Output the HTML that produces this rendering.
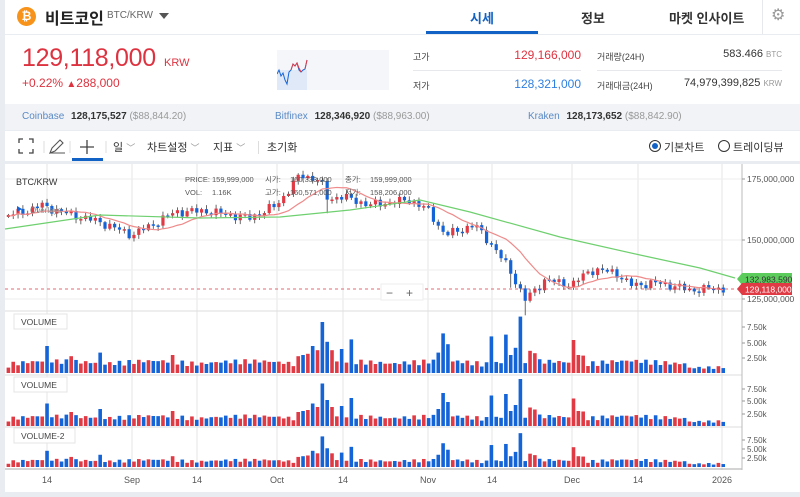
<!DOCTYPE html>
<html><head><meta charset="utf-8">
<style>
*{margin:0;padding:0;box-sizing:border-box}
body{width:800px;height:497px;overflow:hidden;background:#e9ecf1;font-family:"Liberation Sans","Noto Sans CJK KR",sans-serif;position:relative;color:#222}
.a{position:absolute;white-space:nowrap}
</style></head><body>
<div class="a" style="left:5px;top:0;width:795px;height:34px;background:#fff"></div>
<div class="a" style="left:5px;top:35px;width:795px;height:69px;background:#fff"></div>
<div class="a" style="left:5px;top:104px;width:795px;height:26px;background:#f1f3f6"></div>
<div class="a" style="left:5px;top:131px;width:795px;height:30px;background:#fff"></div>
<div class="a" style="left:5px;top:164px;width:795px;height:328px;background:#fff"></div>

<!-- header -->
<div class="a" style="left:17px;top:7px;width:19px;height:19px;border-radius:50%;background:#f7931a;color:#fff;font-size:12px;font-weight:bold;text-align:center;line-height:19px">₿</div>
<div class="a" style="left:45px;top:5px;font-size:16px;font-weight:bold;color:#222">비트코인</div>
<div class="a" style="left:107px;top:10px;font-size:10px;color:#666">BTC/KRW</div>
<div class="a" style="left:159px;top:13px;width:0;height:0;border-left:5px solid transparent;border-right:5px solid transparent;border-top:6px solid #555"></div>
<div class="a" style="left:470px;top:8px;font-size:13px;font-weight:bold;color:#1261c4">시세</div>
<div class="a" style="left:426px;top:31px;width:112px;height:3px;background:#1261c4"></div>
<div class="a" style="left:581px;top:8px;font-size:13px;font-weight:bold;color:#333">정보</div>
<div class="a" style="left:669px;top:8px;font-size:13px;font-weight:bold;color:#333">마켓 인사이트</div>
<div class="a" style="left:762px;top:0;width:1px;height:34px;background:#e6e8ec"></div>
<div class="a" style="left:771px;top:6px;font-size:16px;line-height:20px;color:#999">⚙</div>

<div class="a" style="left:22px;top:44px;font-size:25px;color:#dd3340;letter-spacing:-0.3px">129,118,000</div>
<div class="a" style="left:164px;top:57px;font-size:11px;color:#dd3340">KRW</div>
<div class="a" style="left:22px;top:76px;font-size:12px;color:#dd3340">+0.22% <span style="font-size:10px">▲</span>288,000</div>
<div class="a" style="left:277px;top:50px;width:112px;height:40px;background:#f4f6fa"></div>
<svg class="a" style="left:277px;top:50px" width="40" height="40"><rect x="0" y="20" width="30" height="20" fill="#dfe9f7"/><polyline points="0,24 2,20 4,26 6,23 8,30 10,34 12,22 14,20 16,14 18,16 20,13 22,20 24,22 26,20 28,19 30,10" fill="none" stroke="#1464d8" stroke-width="1"/><polyline points="14,20 16,14 18,16 20,13 22,18 24,22" fill="none" stroke="#e03a45" stroke-width="1"/><polyline points="28,19 30,10" fill="none" stroke="#e03a45"/></svg>

<div class="a" style="left:413px;top:50px;font-size:9px;color:#444">고가</div>
<div class="a" style="left:481px;top:48px;width:100px;text-align:right;font-size:12px;color:#dd3340">129,166,000</div>
<div class="a" style="left:413px;top:70px;width:168px;height:1px;background:#e6e8ec"></div>
<div class="a" style="left:413px;top:79px;font-size:9px;color:#444">저가</div>
<div class="a" style="left:481px;top:77px;width:100px;text-align:right;font-size:12px;color:#2f7fe0">128,321,000</div>
<div class="a" style="left:597px;top:50px;font-size:9px;color:#444">거래량(24H)</div>
<div class="a" style="left:597px;top:70px;width:185px;height:1px;background:#e6e8ec"></div>
<div class="a" style="left:597px;top:79px;font-size:9px;color:#444">거래대금(24H)</div>
<div class="a" style="left:640px;top:48px;width:142px;text-align:right;font-size:11px;color:#333">583.466 <span style="font-size:8px;color:#999">BTC</span></div>
<div class="a" style="left:620px;top:77px;width:162px;text-align:right;font-size:11px;color:#333">74,979,399,825 <span style="font-size:8px;color:#999">KRW</span></div>

<div class="a" style="left:22px;top:111px;font-size:10px;color:#5a8ac6">Coinbase <b style="color:#333;margin-left:4px">128,175,527</b> <span style="color:#999">($88,844.20)</span></div>
<div class="a" style="left:275px;top:111px;font-size:10px;color:#5a8ac6">Bitfinex <b style="color:#333;margin-left:4px">128,346,920</b> <span style="color:#999">($88,963.00)</span></div>
<div class="a" style="left:528px;top:111px;font-size:10px;color:#5a8ac6">Kraken <b style="color:#333;margin-left:4px">128,173,652</b> <span style="color:#999">($88,842.90)</span></div>

<!-- toolbar -->
<svg class="a" style="left:18px;top:138px" width="90" height="18"><path d="M1 5V1H5M11 1H15V5M15 11V15H11M5 15H1V11" fill="none" stroke="#444" stroke-width="1.3"/><line x1="26" y1="3" x2="26" y2="15" stroke="#ddd"/><path d="M32 15L34 10L42 2L45 5L37 13ZM32 15H47" fill="none" stroke="#555" stroke-width="1.1"/><line x1="52" y1="3" x2="52" y2="15" stroke="#ddd"/><path d="M69 2V16M62 9H76" stroke="#444" stroke-width="1.3"/><line x1="88" y1="3" x2="88" y2="15" stroke="#ddd"/></svg>
<div class="a" style="left:72px;top:158px;width:31px;height:3px;background:#1261c4"></div>
<div class="a" style="left:113px;top:139px;font-size:11px;color:#333">일 <span style="color:#999;font-size:9px">﹀</span></div>
<div class="a" style="left:147px;top:139px;font-size:11px;color:#333">차트설정 <span style="color:#999;font-size:9px">﹀</span></div>
<div class="a" style="left:213px;top:139px;font-size:11px;color:#333">지표 <span style="color:#999;font-size:9px">﹀</span></div>
<div class="a" style="left:258px;top:141px;width:1px;height:13px;background:#ddd"></div>
<div class="a" style="left:267px;top:139px;font-size:11px;color:#333">초기화</div>
<div class="a" style="left:649px;top:140px;width:12px;height:12px;border-radius:50%;border:1.3px solid #333"></div>
<div class="a" style="left:652px;top:143px;width:6px;height:6px;border-radius:50%;background:#1261c4"></div>
<div class="a" style="left:664px;top:139px;font-size:11px;color:#333">기본차트</div>
<div class="a" style="left:718px;top:140px;width:12px;height:12px;border-radius:50%;border:1.3px solid #333"></div>
<div class="a" style="left:733px;top:139px;font-size:11px;color:#333">트레이딩뷰</div>

<svg id="c" class="a" style="left:0;top:0" width="800" height="497" font-family="Liberation Sans, Noto Sans CJK KR, sans-serif"></svg>
<script>
var s='',X=function(i){return 8.4+i*4.83};
[47,132,197,277,343,428,492,572,638,722].forEach(function(x){s+='<line x1="'+x+'" y1="164" x2="'+x+'" y2="470" stroke="#e6e6e6"/>'});
[179,240,270,299].forEach(function(y){s+='<line x1="5" y1="'+y+'" x2="742" y2="'+y+'" stroke="#eee"/>'});
[311,375,427].forEach(function(y){s+='<line x1="5" y1="'+y+'" x2="742" y2="'+y+'" stroke="#ddd"/>'});
s+='<line x1="5" y1="469" x2="742" y2="469" stroke="#aaa"/><line x1="742" y1="164" x2="742" y2="470" stroke="#bbb"/>';
var K=[[8,215],[25,212],[40,205],[65,213],[100,222],[132,235],[150,226],[175,212],[205,211],[250,218],[277,205],[300,175],[320,180],[328,200],[340,196],[370,205],[410,200],[428,210],[445,235],[475,225],[492,245],[510,270],[525,300],[545,280],[572,285],[590,270],[615,272],[630,285],[660,283],[690,290],[730,288]];
function ip(x){for(var k=1;k<K.length;k++){if(x<=K[k][0]){var a=K[k-1],b=K[k];return a[1]+(b[1]-a[1])*(x-a[0])/(b[0]-a[0]);}}return K[K.length-1][1];}
var N=149,C=[],O=[],V=[];
for(var i=0;i<N;i++){C[i]=ip(X(i))+3*Math.sin(i*2.3)+2*Math.sin(i*5.1);}
var sp={8:4.5,13:2.8,19:3.4,34:3.0,60:2.8,61:3.0,62:3.2,63:4.5,64:3.8,65:8.5,66:5.2,67:3.8,69:4.0,71:5.6,89:3.4,90:6.6,91:4.8,100:6.1,103:6.4,104:3.0,105:4.2,106:9.4,108:3.7,109:3.3,117:5.5,118:3.0,119:2.9};
for(var i=0;i<N;i++){O[i]=i?C[i-1]:C[i]+2;V[i]=sp[i]||(0.9+0.9*Math.abs(Math.sin(i*1.7))+0.5*Math.abs(Math.sin(i*3.3)));if(i>140)V[i]*=0.5;}
for(var i=0;i<N;i++){var x=X(i),o=O[i],c=C[i],up=c<o,col=up?'#e03a45':'#1464d8';var t=Math.min(o,c),b=Math.max(o,c);if(b-t<1.5)b=t+1.5;var w1=1+3*Math.abs(Math.sin(i*7.7)),w2=1+3*Math.abs(Math.sin(i*3.9));if(i==66||i==104||i==107)w2+=12;
s+='<line x1="'+x+'" y1="'+(t-w1)+'" x2="'+x+'" y2="'+(b+w2)+'" stroke="#444" stroke-width="0.8"/><rect x="'+(x-1.6)+'" y="'+t+'" width="3.2" height="'+(b-t)+'" fill="'+col+'"/>';
var vc=up?'#e03a45':'#1464d8';
[[373,6],[426,5],[467,3.6]].forEach(function(p){var h=V[i]*p[1];s+='<rect x="'+(x-1.8)+'" y="'+(p[0]-h)+'" width="3.6" height="'+h+'" fill="'+vc+'"/>';});}
var r='';for(var i=0;i<N;i++){var a=0,n=0;for(var j=Math.max(0,i-11);j<=i;j++){a+=C[j];n++;}r+=X(i)+','+(a/n+1)+' ';}
s+='<polyline points="'+r+'" fill="none" stroke="#ef8a8a" stroke-width="1.2"/>';
s+='<polyline points="5,229 100,215 200,218 280,217 350,210 420,200 470,212 560,237 640,255 700,268 735,278" fill="none" stroke="#6fd06f" stroke-width="1.2"/>';
s+='<line x1="5" y1="289" x2="742" y2="289" stroke="#e03a45" stroke-dasharray="3,3" stroke-width="0.8"/>';
s+='<text x="16" y="185" font-size="9" fill="#333">BTC/KRW</text><text x="30" y="213" font-size="8" fill="#888">Overlays</text><path d="M17 206L22 209L17 212Z" fill="#1464d8"/>';
var T=[[185,182,'PRICE:'],[212,182,'159,999,000'],[265,182,'시가:'],[290,182,'160,333,000'],[345,182,'종가:'],[370,182,'159,999,000'],[185,195,'VOL:'],[212,195,'1.16K'],[265,195,'고가:'],[290,195,'160,571,000'],[345,195,'저가:'],[370,195,'158,206,000']];
T.forEach(function(t){s+='<text x="'+t[0]+'" y="'+t[1]+'" font-size="7.5" fill="#555">'+t[2]+'</text>'});
s+='<rect x="381" y="284" width="42" height="16" fill="#fff" stroke="#eee"/><text x="386" y="297" font-size="12" fill="#666">−</text><text x="406" y="297" font-size="12" fill="#666">+</text>';
[[179,'175,000,000'],[240,'150,000,000'],[299,'125,000,000']].forEach(function(a){s+='<line x1="742" y1="'+a[0]+'" x2="745" y2="'+a[0]+'" stroke="#999"/><text x="747" y="'+(a[0]+3)+'" font-size="8.5" fill="#555">'+a[1]+'</text>'});
s+='<path d="M737 279L742 273H792V285H742Z" fill="#5ccc5c"/><text x="745" y="282.5" font-size="8.5" fill="#333">132,983,590</text>';
s+='<path d="M737 289L742 283H792V295H742Z" fill="#e03a45"/><text x="745" y="292.5" font-size="8.5" fill="#fff">129,118,000</text>';
[[327,'7.50k'],[343,'5.00k'],[358,'2.50k'],[389,'7.50k'],[401,'5.00k'],[414,'2.50k'],[440,'7.50k'],[449,'5.00k'],[458,'2.50k']].forEach(function(a){s+='<line x1="742" y1="'+a[0]+'" x2="745" y2="'+a[0]+'" stroke="#999"/><text x="747" y="'+(a[0]+3)+'" font-size="8" fill="#555">'+a[1]+'</text>'});
[[14,314,53,'VOLUME'],[14,377,53,'VOLUME'],[14,428,61,'VOLUME-2']].forEach(function(a){s+='<rect x="'+a[0]+'" y="'+a[1]+'" width="'+a[2]+'" height="15" fill="#fff" stroke="#e4e4e4"/><text x="'+(a[0]+7)+'" y="'+(a[1]+11)+'" font-size="8.5" fill="#444">'+a[3]+'</text>'});
[[47,'14'],[132,'Sep'],[197,'14'],[277,'Oct'],[343,'14'],[428,'Nov'],[492,'14'],[572,'Dec'],[638,'14'],[722,'2026']].forEach(function(a){s+='<text x="'+a[0]+'" y="483" font-size="9" fill="#555" text-anchor="middle">'+a[1]+'</text>'});
document.getElementById('c').innerHTML=s;
</script>
</body></html>
